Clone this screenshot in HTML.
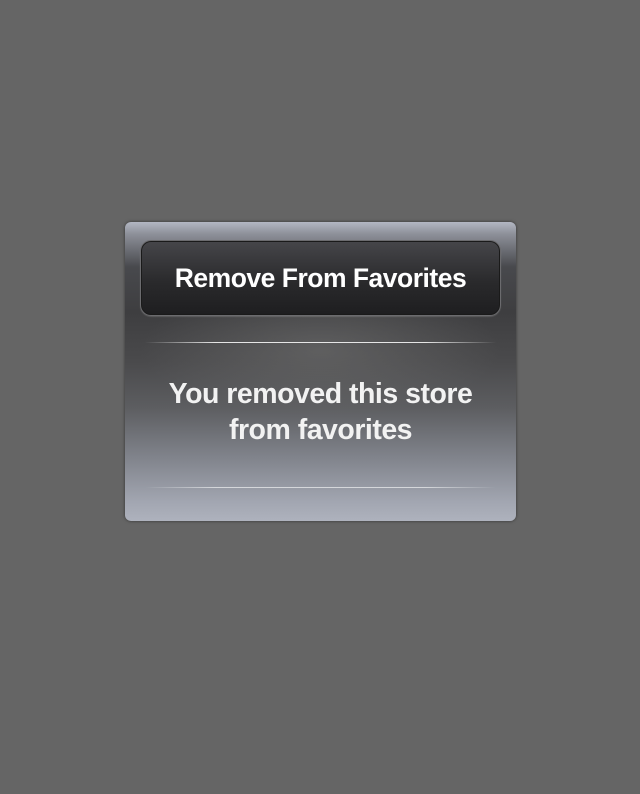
<!DOCTYPE html>
<html><head><style>
html,body{margin:0;padding:0;width:640px;height:794px;background:#656565;overflow:hidden}
.dlg{position:absolute;left:125px;top:222px;width:391px;height:299px;border-radius:6px;
background:
radial-gradient(ellipse 180px 70px at 50% 43%, rgba(110,110,110,0.6), rgba(110,110,110,0) 100%),
linear-gradient(to bottom,#b3b7c3 0px,#8d9099 12px,#48494d 45px,#3e3e40 90px,#4a4a4c 140px,#5c5d60 185px,#80838b 235px,#a2a6b1 280px,#aeb2bd 299px);
box-shadow:0 0 3px rgba(0,0,0,0.5);}
.btn{position:absolute;left:15px;top:18px;width:359px;height:74px;border-radius:11px;
background:linear-gradient(to bottom,#46464a,#2a2a2c 55%,#1e1e20);
border:1px solid #6b6b6e;box-shadow:0 0 0 1px #1a1a1a inset,0 1px 1px rgba(255,255,255,0.15);
color:#fff;font:bold 26.5px "Liberation Sans",sans-serif;text-align:center;line-height:74px;letter-spacing:-0.5px}
.sep{position:absolute;left:20px;width:351px;height:1px;background:linear-gradient(to right,rgba(255,255,255,0),rgba(255,255,255,0.85) 20%,rgba(255,255,255,0.85) 80%,rgba(255,255,255,0))}
.msg{position:absolute;left:0;width:391px;top:154px;text-align:center;color:#f2f2f2;font:bold 28.5px/36px "Liberation Sans",sans-serif;letter-spacing:-0.5px}
</style></head><body>
<div class="dlg">
<div class="btn">Remove From Favorites</div>
<div class="sep" style="top:120px"></div>
<div class="msg">You removed this store<br>from favorites</div>
<div class="sep" style="top:265px;opacity:0.7"></div>
</div>
</body></html>
